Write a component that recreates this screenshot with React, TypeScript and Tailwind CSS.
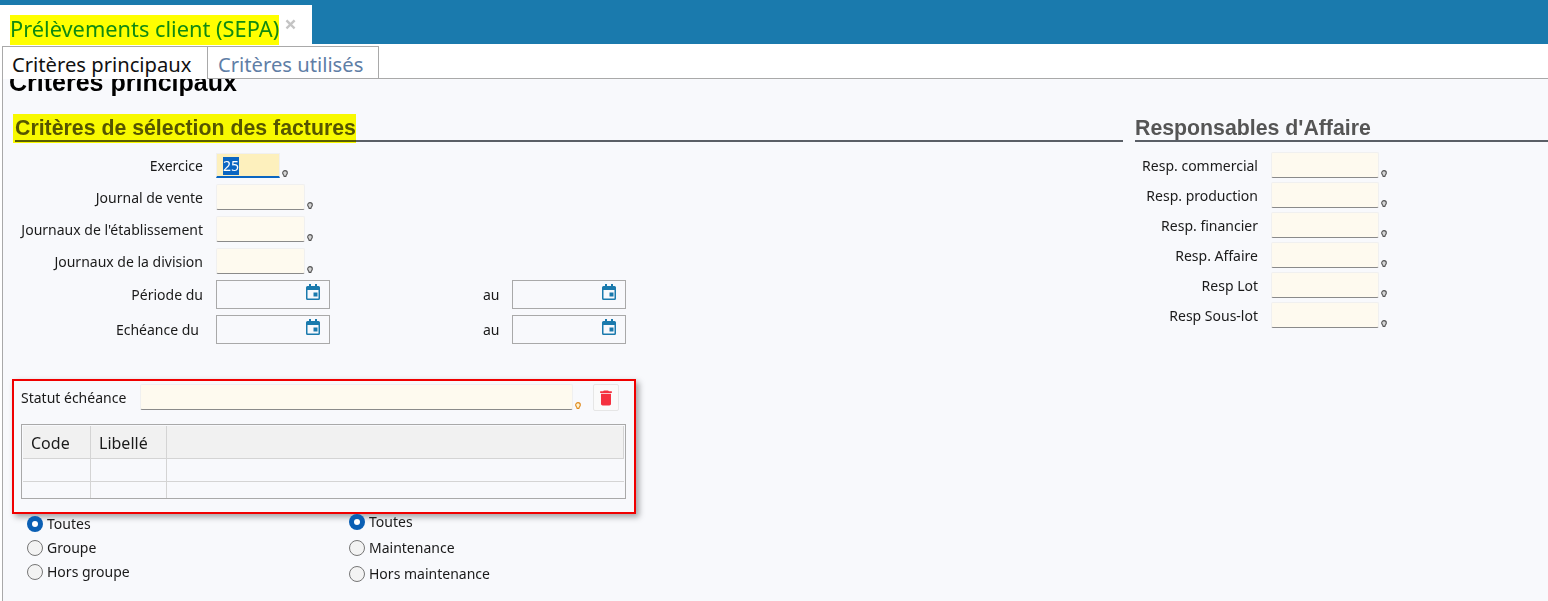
import { MdDelete } from "react-icons/md";

const sans = "font-['Noto_Sans',sans-serif]";
const arial = "font-['Liberation_Sans',Arial,sans-serif]";

const leftFields = ["Journal de vente", "Journaux de l'établissement", "Journaux de la division"];
const rightFields = ["Resp. commercial", "Resp. production", "Resp. financier", "Resp. Affaire", "Resp Lot", "Resp Sous-lot"];

function Pin({ orange = false }: { orange?: boolean }) {
  return (
    <svg width="6" height="7" viewBox="0 0 7 8" className="mb-px shrink-0 self-end">
      <path
        d="M3.5 .7a2.7 2.7 0 0 1 2.7 2.7c0 1.2-1.400 2.600-1.700 3.900h-2C2.200 6 .8 4.600 .8 3.400A2.700 2.700 0 0 1 3.500 .7z"
        fill={orange ? "#fff3d0" : "#d5d5d5"}
        stroke={orange ? "#e08a1e" : "#555"}
        strokeWidth="1.300"
      />
    </svg>
  );
}

function CalendarIcon() {
  return (
    <svg width="14" height="16" viewBox="0 0 14 16" className="text-[#1a7aad]">
      <path fill="currentColor" d="M3 0h2v2h4V0h2v2h1.500A1.500 1.500 0 0 1 14 3.500v11a1.500 1.500 0 0 1-1.500 1.500h-11A1.500 1.500 0 0 1 0 14.500v-11A1.500 1.500 0 0 1 1.500 2H3zM1.500 6v8.500h11V6z" fillRule="evenodd" />
      <rect x="7.500" y="8.500" width="4" height="4" fill="currentColor" />
    </svg>
  );
}

function LookupInput({ className = "w-[89px] h-[26px]" }: { className?: string }) {
  return (
    <div className="flex gap-[2px]">
      <div className={`${className} rounded-[2px] border border-[#f0f0f0] border-b-[#8a8a8a] bg-[#fefaef]`} />
      <Pin />
    </div>
  );
}

function DateInput() {
  return (
    <div className="flex h-[29px] w-[114px] items-start justify-end border border-[#a9a9a9] pr-[9px] pt-[3px]">
      <CalendarIcon />
    </div>
  );
}

function Radio({ label, checked = false, className = "" }: { label: string; checked?: boolean; className?: string }) {
  return (
    <div className={`flex items-center gap-[4px] ${className}`}>
      {checked ? (
        <span className="flex h-4 w-4 items-center justify-center rounded-full bg-[#0a5fb4]">
          <span className="h-[6px] w-[6px] rounded-full bg-white" />
        </span>
      ) : (
        <span className="h-4 w-4 rounded-full border border-[#767676] bg-[#f3f3f3]" />
      )}
      <span className="text-[14px] leading-[18px] text-[#1a1a1a]">{label}</span>
    </div>
  );
}

export default function App() {
  return (
    <div className={`h-[601px] w-[1548px] overflow-hidden bg-white ${sans}`}>
      <div className="flex h-[44px] items-end bg-[#1a7aad]">
        <div className="flex h-[39px] w-[312px] items-start bg-white pl-[10px] pt-[10px]">
          <span className="h-[30px] bg-[#ffff00] text-[21.8px] leading-[28px] whitespace-nowrap text-[#118a11]">Prélèvements client (SEPA)</span>
          <span className="ml-[5px] -mt-[6px] text-[22px] font-bold leading-[28px] text-[#c4c4c4]">×</span>
        </div>
      </div>

      <div className="ml-[2px] mt-[2px] h-[555px] border-l border-[#a9a9a9] bg-[#f8f9fc]">
        <div className="relative z-10 flex h-[33px] bg-white">
          <div className="w-[205px] border-r border-t border-[#a9a9a9] pl-[9px] text-[20.2px] leading-[35px] text-[#111]">Critères principaux</div>
          <div className="w-[171px] border-b border-r border-t border-[#a9a9a9] pl-[10px] text-[20.2px] leading-[35px] text-[#5f7ea6]">Critères utilisés</div>
          <div className="flex-1 border-b border-[#a9a9a9]" />
        </div>

        <div className="h-[10px]">
          <h1 className={`${arial} -mt-[10px] pl-[6px] text-[25px] font-bold leading-[26px] text-black`}>Critères principaux</h1>
        </div>

        <div className="mt-[36px] flex">
          <div className="ml-[10px] w-[1110px] shrink-0">
            <div className={`${arial} ml-[2px] h-[27px] border-b-2 border-[#5a5f66] text-[21.3px] font-bold leading-[26px] text-[#555]`}>
              <span className="relative inline-block whitespace-nowrap">
                Critères de sélection des factures
                <span className="absolute -bottom-[2px] -left-[2px] right-0 -top-[1px] bg-[#ffff00] mix-blend-multiply" />
              </span>
            </div>

            <div className="mt-[11px] flex flex-col">
              <div className="flex items-start">
                <div className="w-[190px] pt-[3px] pr-0 text-right text-[14px] leading-[20px] text-[#1a1a1a]">Exercice</div>
                <div className="ml-[13px] flex gap-[2px]">
                  <div className="flex h-[25px] w-[64px] items-start border border-[#f0f0f0] border-b-2 border-b-[#0a66c2] bg-[#fdf0bd] pl-[6px] pt-[3px]">
                    <span className="bg-[#0a66c2] text-[14px] leading-[18px] text-white">25</span>
                  </div>
                  <Pin />
                </div>
              </div>
              {leftFields.map((label) => (
                <div key={label} className="mt-[6px] flex items-start">
                  <div className="w-[190px] whitespace-nowrap pt-[4px] text-right text-[14px] leading-[20px] text-[#1a1a1a]">{label}</div>
                  <div className="ml-[13px]">
                    <LookupInput />
                  </div>
                </div>
              ))}
              <div className="mt-[6px] flex items-center">
                <div className="w-[190px] pt-[1px] text-right text-[14px] leading-[20px] text-[#1a1a1a]">Période du</div>
                <div className="ml-[13px]"><DateInput /></div>
                <div className="ml-[153px] w-[16px] text-[14px] text-[#1a1a1a]">au</div>
                <div className="ml-[13px]"><DateInput /></div>
              </div>
              <div className="mt-[6px] flex items-center">
                <div className="w-[186px] text-right text-[14px] leading-[20px] text-[#1a1a1a]">Echéance du</div>
                <div className="ml-[17px]"><DateInput /></div>
                <div className="ml-[153px] w-[16px] text-[14px] text-[#1a1a1a]">au</div>
                <div className="ml-[13px]"><DateInput /></div>
              </div>
            </div>

            <div className="-ml-[1px] mt-[35px] h-[135px] w-[624px] border-2 border-[#f00000] pl-[7px] pr-[8px] pt-[3px] shadow-[3px_3px_6px_rgba(0,0,0,0.35)]">
              <div className="flex items-start">
                <div className="w-[119px] pt-[4px] text-[14px] leading-[20px] text-[#1a1a1a]">Statut échéance</div>
                <div className="flex gap-[2px]">
                  <div className="h-[26px] w-[433px] rounded-[2px] border border-[#f0f0f0] border-b-[#8a8a8a] bg-[#fefaef]" />
                  <Pin orange />
                </div>
                <div className="ml-[12px] flex h-[27px] w-[26px] items-center justify-center rounded-[2px] border border-[#e6e6e6] bg-[#fafafa]">
                  <MdDelete className="text-[20px] text-[#f5303f]" />
                </div>
              </div>
              <div className="mt-[13px] h-[75px] w-[605px] border border-[#a9a9a9] p-px">
                <div className="flex h-[33px] border-b border-[#d4d4d4] bg-[#f1f1f1] text-[16px] leading-[34px] text-[#1a1a1a]">
                  <div className="w-[68px] border-r border-[#d4d4d4] pl-[8px]">Code</div>
                  <div className="w-[76px] border-r border-[#d4d4d4] pl-[8px]">Libellé</div>
                  <div className="flex-1 border-r border-[#d4d4d4]" />
                </div>
                <div className="flex h-[23px] border-b border-[#d4d4d4]">
                  <div className="w-[68px] border-r border-[#d4d4d4]" />
                  <div className="w-[76px] border-r border-[#d4d4d4]" />
                </div>
                <div className="flex h-[16px]">
                  <div className="w-[68px] border-r border-[#d4d4d4]" />
                  <div className="w-[76px] border-r border-[#d4d4d4]" />
                </div>
              </div>
            </div>

            <div className="flex pl-[14px]">
              <div className="w-[322px] pt-[1px]">
                <Radio label="Toutes" checked />
                <Radio label="Groupe" className="mt-[6px]" />
                <Radio label="Hors groupe" className="mt-[6px]" />
              </div>
              <div className="-mt-[1px]">
                <Radio label="Toutes" checked />
                <Radio label="Maintenance" className="mt-[8px]" />
                <Radio label="Hors maintenance" className="mt-[8px]" />
              </div>
            </div>
          </div>

          <div className="ml-[12px] flex-1">
            <div className={`${arial} h-[27px] border-b-2 border-[#5a5f66] text-[21.3px] font-bold leading-[26px] text-[#555]`}>
              Responsables d'Affaire
            </div>
            <div className="mt-[10px] flex flex-col gap-[4px]">
              {rightFields.map((label) => (
                <div key={label} className="flex items-start">
                  <div className="w-[123px] whitespace-nowrap pt-[4px] text-right text-[14px] leading-[20px] text-[#1a1a1a]">{label}</div>
                  <div className="ml-[13px]">
                    <LookupInput className="h-[26px] w-[108px]" />
                  </div>
                </div>
              ))}
            </div>
          </div>
        </div>
      </div>
    </div>
  );
}
